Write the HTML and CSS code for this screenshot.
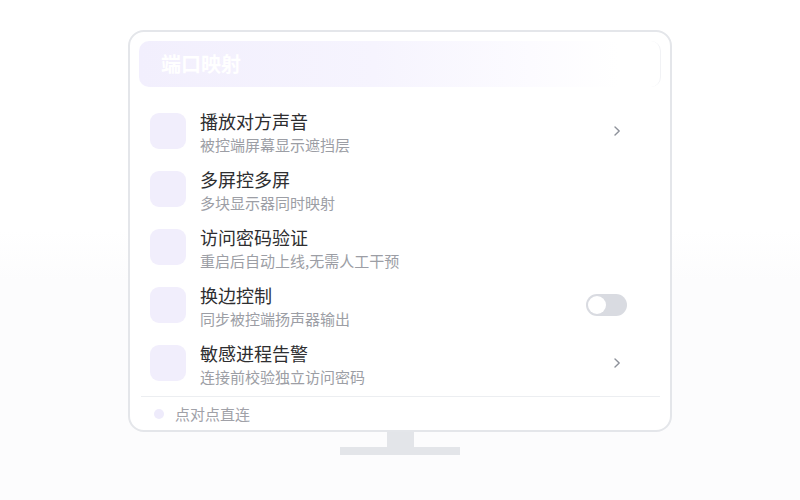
FILE: index.html
```html
<!DOCTYPE html>
<html lang="zh-CN">
<head>
<meta charset="utf-8">
<title>端口映射</title>
<link rel="stylesheet" href="styles.css">
</head>
<body>
<div class="stage">
  <div class="monitor">
    <div class="header"><span class="header-title">端口映射</span></div>
    <div class="rows">
      <div class="row">
        <div class="icon"></div>
        <div class="text"><div class="title">播放对方声音</div><div class="sub">被控端屏幕显示遮挡层</div></div>
        <svg class="chev" width="8" height="12" viewBox="0 0 8 12"><path d="M2 2 L6.2 6 L2 10" fill="none" stroke="#8d919a" stroke-width="1.4" stroke-linecap="round" stroke-linejoin="round"/></svg>
      </div>
      <div class="row">
        <div class="icon"></div>
        <div class="text"><div class="title">多屏控多屏</div><div class="sub">多块显示器同时映射</div></div>
      </div>
      <div class="row">
        <div class="icon"></div>
        <div class="text"><div class="title">访问密码验证</div><div class="sub">重启后自动上线,无需人工干预</div></div>
      </div>
      <div class="row">
        <div class="icon"></div>
        <div class="text"><div class="title">换边控制</div><div class="sub">同步被控端扬声器输出</div></div>
        <div class="toggle"><div class="knob"></div></div>
      </div>
      <div class="row">
        <div class="icon"></div>
        <div class="text"><div class="title">敏感进程告警</div><div class="sub">连接前校验独立访问密码</div></div>
        <svg class="chev" width="8" height="12" viewBox="0 0 8 12"><path d="M2 2 L6.2 6 L2 10" fill="none" stroke="#8d919a" stroke-width="1.4" stroke-linecap="round" stroke-linejoin="round"/></svg>
      </div>
    </div>
    <div class="divider"></div>
    <div class="footer"><span class="dot"></span><span class="footer-text">点对点直连</span></div>
  </div>
  <div class="neck"></div>
  <div class="base"></div>
</div>
</body>
</html>
```
FILE: styles.css
```css
html, body {
  margin: 0;
  padding: 0;
}
body {
  width: 800px;
  height: 500px;
  background: linear-gradient(to bottom, #ffffff 0, #ffffff 46%, #fcfcfd 56%, #fcfcfd 100%);
  font-family: "Noto Sans CJK SC", "Noto Sans", sans-serif;
  overflow: hidden;
}
.stage {
  display: flex;
  flex-direction: column;
  align-items: center;
  padding-top: 30px;
}
.monitor {
  box-sizing: border-box;
  width: 544px;
  height: 402px;
  border: 2px solid #e4e6ea;
  border-radius: 16px;
  background: #ffffff;
  padding: 9px 9px 0 9px;
  display: flex;
  flex-direction: column;
}
.header {
  height: 46px;
  border-radius: 10px;
  background: linear-gradient(to right, #f2effd 0%, #f6f4fe 45%, #fcfbff 75%, #ffffff 92%);
  border-right: 1px solid #f1f2f5;
  display: flex;
  align-items: center;
  padding-left: 22px;
}
.header-title {
  color: #ffffff;
  font-size: 20px;
  font-weight: 700;
  line-height: 26px;
}
.rows {
  margin-top: 15px;
  display: flex;
  flex-direction: column;
}
.row {
  height: 58px;
  display: flex;
  align-items: center;
  padding: 0 34px 0 11px;
}
.icon {
  width: 36px;
  height: 36px;
  border-radius: 9px;
  background: #f1eefc;
  flex: none;
}
.text {
  flex: 1;
  margin-left: 14px;
  padding-top: 2px;
}
.title {
  font-size: 18px;
  line-height: 26px;
  color: #2e2e30;
}
.sub {
  font-size: 15px;
  line-height: 22px;
  color: #9c9ea5;
}
.chev {
  flex: none;
  margin-right: 6px;
}
.toggle {
  width: 41px;
  height: 22px;
  border-radius: 11px;
  background: #d9dbe1;
  padding: 2px;
  box-sizing: border-box;
  flex: none;
}
.knob {
  width: 18px;
  height: 18px;
  border-radius: 50%;
  background: #ffffff;
}
.divider {
  height: 1px;
  background: #eceef1;
  margin: 4px 1px 0 2px;
}
.footer {
  flex: 1;
  display: flex;
  align-items: center;
  padding-left: 15px;
}
.dot {
  width: 10px;
  height: 10px;
  border-radius: 50%;
  background: #eeebfb;
}
.footer-text {
  margin-left: 11px;
  font-size: 15px;
  line-height: 20px;
  color: #a0a1a8;
}
.neck {
  width: 27px;
  height: 15px;
  background: #e3e5e9;
}
.base {
  width: 120px;
  height: 8px;
  background: #e3e5e9;
}
```
